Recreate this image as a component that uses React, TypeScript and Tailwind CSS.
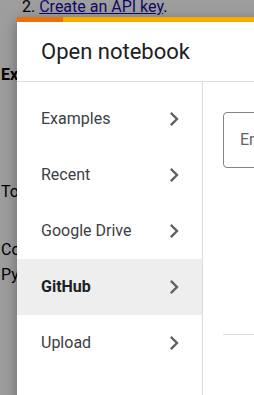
import { ReactNode } from 'react';

function Chevron() {
  return (
    <svg width="28" height="28" viewBox="0 0 24 24" className="fill-[#5f6368] shrink-0">
      <path d="M10 6L8.59 7.41 13.17 12l-4.58 4.59L10 18l6-6z" />
    </svg>
  );
}

interface NavItemProps {
  label: string;
  active?: boolean;
}

function NavItem({ label, active }: NavItemProps) {
  return (
    <div
      className={`h-[56px] flex items-center justify-between pl-6 pr-[14px] text-[16px] whitespace-nowrap ${
        active ? 'bg-[#eeeeee] font-bold text-[#202124]' : 'text-[#3c4043]'
      }`}
    >
      <span>{label}</span>
      <Chevron />
    </div>
  );
}

function PageText({ children, className }: { children: ReactNode; className?: string }) {
  return <div className={`text-[16px] leading-[20px] text-black whitespace-nowrap ${className ?? ''}`}>{children}</div>;
}

export default function App() {
  const items = ['Examples', 'Recent', 'Google Drive', 'GitHub', 'Upload'];

  return (
    <div className="relative w-[254px] h-[395px] overflow-hidden bg-white font-['Roboto',sans-serif]">
      {/* page under the dialog */}
      <div className="-mt-[3px] pl-[1px]">
        <PageText className="pl-[21px]">
          2. <span className="text-[#1a0dab] underline">Create an API key</span>.
        </PageText>
        <PageText className="mt-[48px] font-bold text-[15px]">Example</PageText>
        <PageText className="mt-[97px]">To</PageText>
        <PageText className="mt-[38px]">Colab</PageText>
        <PageText className="mt-[5px]">Python</PageText>
      </div>

      {/* scrim */}
      <div className="absolute inset-0 bg-black/[0.38]" />

      {/* dialog */}
      <div className="absolute left-[17px] top-[17px] w-[420px] h-[420px] bg-white shadow-[0_4px_14px_rgba(0,0,0,0.35)] flex flex-col">
        <div className="flex h-[5px]">
          <div className="w-[46px] bg-[#e8710a]" />
          <div className="flex-1 bg-[#f9ab00]" />
        </div>
        <div className="h-[60px] border-b border-[#dadce0] flex items-center pl-6 text-[22px] text-[#202124]">
          Open notebook
        </div>
        <div className="flex flex-1">
          <div className="w-[186px] shrink-0 border-r border-[#dadce0] pt-[9px]">
            {items.map((item) => (
              <NavItem key={item} label={item} active={item === 'GitHub'} />
            ))}
          </div>
          <div className="flex-1 min-w-0 pl-5 pt-[30px]">
            <div className="h-[56px] w-[300px] rounded-[4px] border border-[#80868b] flex items-center pl-4 text-[16px] text-[#5f6368] whitespace-nowrap overflow-hidden">
              Enter a GitHub URL or search by organization or user
            </div>
            <div className="mt-[166px] h-px w-[300px] bg-[#dadce0]" />
          </div>
        </div>
      </div>
    </div>
  );
}
